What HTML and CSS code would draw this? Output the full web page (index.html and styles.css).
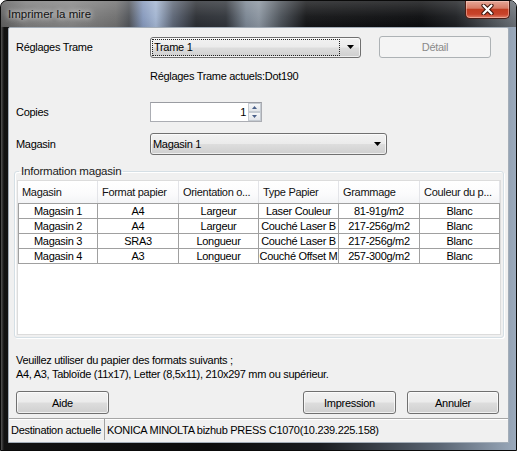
FILE: index.html
```html
<!DOCTYPE html>
<html lang="fr">
<head>
<meta charset="utf-8">
<title>Imprimer la mire</title>
<link rel="stylesheet" href="styles.css">
</head>
<body>
<div class="window">
  <div class="titlebar">
    <span class="title">Imprimer la mire</span>
    <div class="close">
      <svg width="13" height="11" viewBox="0 0 13 11"><path d="M2.5 1.5 L10.5 9.5 M10.5 1.5 L2.5 9.5" stroke="#3a1209" stroke-width="4.2" stroke-linecap="round"/><path d="M2.5 1.5 L10.5 9.5 M10.5 1.5 L2.5 9.5" stroke="#ffffff" stroke-width="2.2" stroke-linecap="round"/></svg>
    </div>
  </div>
  <div class="client">
    <div class="form">
      <div class="row row-trame">
        <span class="label">Réglages Trame</span>
        <div class="combo combo-trame">
          <span class="combo-text focus">Trame 1</span>
          <span class="combo-arrow"><svg width="7" height="4" viewBox="0 0 7 4"><path d="M0 0 H7 L3.5 4 Z" fill="#000"/></svg></span>
        </div>
        <button class="btn btn-detail" disabled>Détail</button>
      </div>
      <div class="current">Réglages Trame actuels:Dot190</div>
      <div class="row row-copies">
        <span class="label">Copies</span>
        <div class="spin">
          <span class="spin-val">1</span>
          <div class="spin-btns">
            <span class="spin-btn"><svg width="5" height="3" viewBox="0 0 5 3"><path d="M0 3 H5 L2.5 0 Z" fill="#4a6089"/></svg></span>
            <span class="spin-btn"><svg width="5" height="3" viewBox="0 0 5 3"><path d="M0 0 H5 L2.5 3 Z" fill="#4a6089"/></svg></span>
          </div>
        </div>
      </div>
      <div class="row row-magasin">
        <span class="label">Magasin</span>
        <div class="combo combo-mag">
          <span class="combo-text">Magasin 1</span>
          <span class="combo-arrow"><svg width="7" height="4" viewBox="0 0 7 4"><path d="M0 0 H7 L3.5 4 Z" fill="#000"/></svg></span>
        </div>
      </div>
      <fieldset class="group">
        <legend>Information magasin</legend>
        <div class="list">
          <div class="lhead">
            <span class="hcell">Magasin</span>
            <span class="hcell">Format papier</span>
            <span class="hcell">Orientation o...</span>
            <span class="hcell">Type Papier</span>
            <span class="hcell">Grammage</span>
            <span class="hcell">Couleur du p...</span>
          </div>
          <div class="lbody">
            <div class="lrow"><span>Magasin 1</span><span>A4</span><span>Largeur</span><span>Laser Couleur</span><span>81-91g/m2</span><span>Blanc</span></div>
            <div class="lrow"><span>Magasin 2</span><span>A4</span><span>Largeur</span><span>Couché Laser B</span><span>217-256g/m2</span><span>Blanc</span></div>
            <div class="lrow"><span>Magasin 3</span><span>SRA3</span><span>Longueur</span><span>Couché Laser B</span><span>217-256g/m2</span><span>Blanc</span></div>
            <div class="lrow"><span>Magasin 4</span><span>A3</span><span>Longueur</span><span>Couché Offset M</span><span>257-300g/m2</span><span>Blanc</span></div>
          </div>
        </div>
      </fieldset>
      <p class="note">Veuillez utiliser du papier des formats suivants ;<br>A4, A3, Tabloïde (11x17), Letter (8,5x11), 210x297 mm ou supérieur.</p>
      <div class="buttons">
        <button class="btn btn-aide">Aide</button>
        <button class="btn btn-print">Impression</button>
        <button class="btn btn-cancel">Annuler</button>
      </div>
    </div>
    <div class="status">
      <span class="st-label">Destination actuelle</span>
      <span class="st-value">KONICA MINOLTA bizhub PRESS C1070(10.239.225.158)</span>
    </div>
  </div>
</div>
</body>
</html>
```
FILE: styles.css
```css
html, body {
  margin: 0;
  padding: 0;
}
body {
  width: 517px;
  height: 451px;
  overflow: hidden;
  background: #ffffff;
  font-family: "Liberation Sans", Arial, sans-serif;
  font-size: 11px;
  letter-spacing: -0.3px;
  color: #000;
}
.window {
  width: 517px;
  height: 451px;
  box-sizing: border-box;
  border: 1px solid #0a0a0a;
  border-radius: 7px 7px 0 0;
  background:
    linear-gradient(90deg, rgba(140,140,140,0.55) 0, rgba(140,140,140,0) 3px),
    linear-gradient(90deg, #121212 0%, #0c0c0c 40%, #1a1d21 62%, #5a6573 85%, #9aa9bb 100%);
  display: flex;
  flex-direction: column;
  overflow: hidden;
}
.titlebar {
  height: 26px;
  flex: none;
  display: flex;
  background:
    linear-gradient(180deg, rgba(255,255,255,0.18) 0%, rgba(255,255,255,0.04) 60%, rgba(0,0,0,0.05) 100%),
    linear-gradient(90deg, #5e5e5e 0px, #7b7b7b 25px, #848484 70px, #6f6f6f 115px, #515459 128px, #8598bb 142px, #a3b5d1 155px, #5d6676 172px, #2b2e33 195px, #30343a 225px, #7a8592 245px, #8a949f 258px, #4a5057 280px, #141517 305px, #0b0c0e 420px, #1d1f22 455px, #4b5056 490px, #6d737a 517px);
}
.title {
  padding-left: 7px;
  line-height: 26px;
  font-size: 11.5px;
  letter-spacing: 0;
  color: #111;
  text-shadow: 0 0 5px rgba(255,255,255,0.9), 0 0 8px rgba(255,255,255,0.6);
}
.close {
  margin-left: auto;
  margin-right: 6px;
  width: 45px;
  height: 18px;
  box-sizing: border-box;
  border: 1px solid #4a1d15;
  border-top: none;
  border-radius: 0 0 5px 5px;
  background: linear-gradient(180deg, #e6a797 0%, #d77c66 42%, #c13d22 50%, #c8432a 78%, #e1806a 100%);
  box-shadow: inset 0 0 0 1px rgba(255,220,210,0.45);
  display: flex;
  align-items: center;
  justify-content: center;
}
.close svg {
  display: block;
}
.client {
  flex: none;
  margin: 0 7px;
  width: 501px;
  height: 416px;
  box-sizing: border-box;
  border: 1px solid #a3adb8;
  border-radius: 2px 2px 0 0;
  background: #f0f0f0;
  display: flex;
  flex-direction: column;
}
.form {
  padding: 8px 4px 0 5px;
}
.row {
  display: flex;
  align-items: center;
  padding-left: 2px;
}
.label {
  width: 134px;
  flex: none;
}
.row-trame {
  height: 22px;
}
.combo {
  box-sizing: border-box;
  display: flex;
  align-items: center;
  border: 1px solid #707070;
  border-radius: 3px;
  background: linear-gradient(180deg, #f2f2f2 0%, #ebebeb 48%, #dddddd 52%, #cfcfcf 100%);
  box-shadow: inset 0 0 0 1px rgba(255,255,255,0.65);
}
.combo-trame {
  width: 211px;
  height: 21px;
}
.combo-mag {
  width: 237px;
  height: 22px;
}
.combo-text {
  flex: 1;
  padding-left: 2px;
  line-height: 15px;
}
.combo-text.focus {
  flex: none;
  width: 188px;
  box-sizing: border-box;
  margin-left: 1px;
  padding-left: 1px;
  border: 1px dotted #222;
  height: 17px;
}
.combo-arrow {
  flex: 1;
  display: flex;
  justify-content: center;
  align-items: center;
}
.combo-mag .combo-arrow {
  flex: none;
  width: 18px;
}
.combo-arrow svg {
  display: block;
}
.btn {
  box-sizing: border-box;
  font-family: inherit;
  font-size: 11px;
  letter-spacing: -0.3px;
  color: #000;
  border: 1px solid #707070;
  border-radius: 3px;
  background: linear-gradient(180deg, #f2f2f2 0%, #ebebeb 48%, #dddddd 52%, #cfcfcf 100%);
  box-shadow: inset 0 0 0 1px rgba(255,255,255,0.7);
  padding: 0;
  margin: 0;
  height: 23px;
}
.btn-detail {
  margin-left: 18px;
  width: 112px;
  height: 22px;
  color: #8a8a8a;
  border-color: #adb2b5;
  background: #f4f4f4;
  box-shadow: none;
}
.current {
  margin-top: 12px;
  padding-left: 136px;
  line-height: 13px;
}
.row-copies {
  margin-top: 19px;
  height: 20px;
}
.spin {
  width: 112px;
  height: 20px;
  box-sizing: border-box;
  border: 1px solid #abadb3;
  border-top-color: #9a9ca2;
  background: #fff;
  display: flex;
  align-items: stretch;
}
.spin-val {
  flex: 1;
  text-align: right;
  padding-right: 2px;
  line-height: 18px;
}
.spin-btns {
  width: 13px;
  display: flex;
  flex-direction: column;
}
.spin-btn {
  flex: 1;
  box-sizing: border-box;
  border: 1px solid #c5cbd2;
  background: linear-gradient(180deg, #f6f7f8, #e2e5e9);
  display: flex;
  align-items: center;
  justify-content: center;
}
.spin-btn svg {
  display: block;
}
.row-magasin {
  margin-top: 11px;
  height: 22px;
}
.group {
  margin: 10px 0 0 0;
  width: 490px;
  box-sizing: border-box;
  border: 1px solid #d5dfe5;
  border-radius: 3px;
  box-shadow: inset 1px 1px 0 #fff, 1px 1px 0 #fff;
  padding: 0 2px 2px 2px;
  min-width: 0;
}
.group legend {
  padding: 0 2px;
  margin-left: 2px;
  line-height: 13px;
  font-size: 11.5px;
  letter-spacing: -0.2px;
  color: #1a1a1a;
}
.list {
  margin-top: 2px;
  height: 155px;
  box-sizing: border-box;
  border: 1px solid #dcdcdc;
  background: #fff;
}
.lhead, .lrow {
  display: grid;
  grid-template-columns: 80px 81px 80px 80px 81px 80px;
}
.lhead {
  height: 22px;
}
.hcell {
  box-sizing: border-box;
  padding-left: 4px;
  padding-top: 1px;
  line-height: 21px;
  white-space: nowrap;
  overflow: hidden;
  background: linear-gradient(180deg, #ffffff 0%, #fbfbfc 60%, #f3f4f6 100%);
  border-right: 1px solid #e3e4e8;
  color: #111;
}
.lbody {
  border-top: 1px solid #a0a0a0;
}
.lrow span {
  box-sizing: border-box;
  text-align: center;
  line-height: 14px;
  height: 15px;
  border-bottom: 1px solid #a0a0a0;
  border-right: 1px solid #a0a0a0;
  white-space: nowrap;
  overflow: hidden;
}
.lrow span:first-child {
  border-left: 1px solid #a0a0a0;
}
.note {
  margin: 15px 0 0 0;
  padding-left: 2px;
  line-height: 14px;
}
.buttons {
  margin-top: 10px;
  padding-left: 2px;
  display: flex;
}
.btn-aide {
  width: 93px;
}
.btn-print {
  margin-left: auto;
  width: 93px;
}
.btn-cancel {
  margin-left: 11px;
  margin-right: 5px;
  width: 92px;
}
.status {
  margin-top: auto;
  height: 24px;
  box-sizing: border-box;
  border-top: 1px solid #a6a6a6;
  box-shadow: inset 0 1px 0 #ffffff;
  display: flex;
  align-items: flex-start;
}
.st-label {
  width: 96px;
  box-sizing: border-box;
  padding-left: 2px;
  padding-top: 1px;
  line-height: 20px;
  border-right: 1px solid #a0a0a0;
  white-space: nowrap;
}
.st-value {
  padding-left: 2px;
  padding-top: 1px;
  line-height: 20px;
  white-space: nowrap;
}
```
